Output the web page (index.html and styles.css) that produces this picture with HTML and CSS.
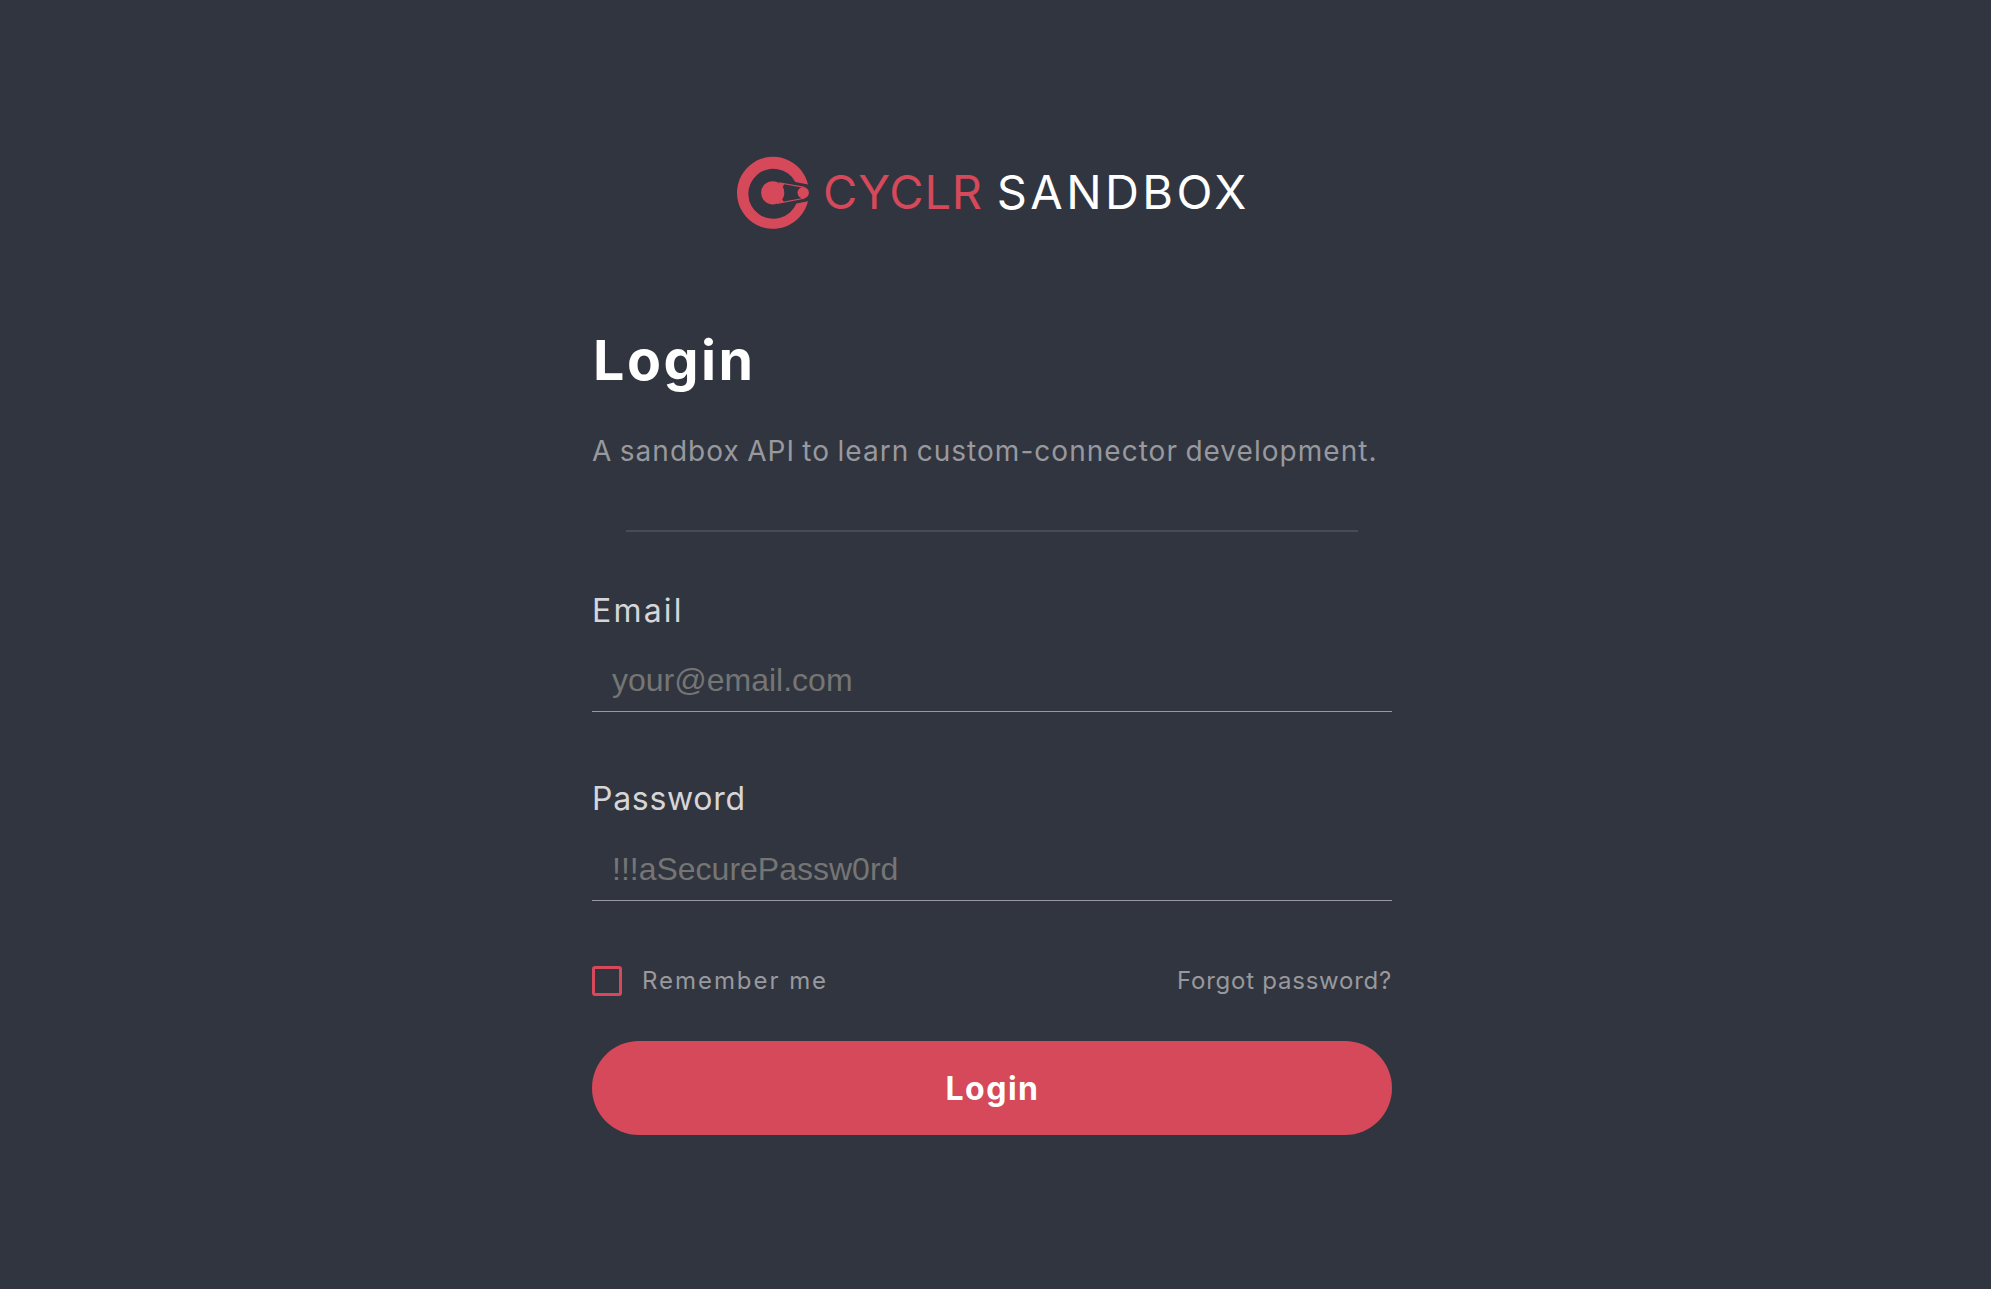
FILE: index.html
```html
<!DOCTYPE html>
<html lang="en">
<head>
<meta charset="utf-8">
<title>Login - Cyclr Sandbox</title>
<link rel="stylesheet" href="styles.css">
</head>
<body>
<main class="login">
  <div class="brand">
    <svg class="brand-mark" viewBox="0 0 72 72" aria-hidden="true">
      <path class="fill" d="M71 27.4 A36 36 0 1 0 71 44.2 L59.4 46.4 A25 25 0 1 1 58.4 25 Z"/>
      <circle class="fill" cx="35.7" cy="35.8" r="11.6"/>
      <circle class="fill" cx="66.2" cy="35.8" r="5.7"/>
      <path class="belt" d="M42 25.8 L67.5 30.4 M40 46.4 L67.5 41.2"/>
      <path class="fill" d="M42 25.4 L47.5 26.8 L45 31 Z M44.5 41.5 L47 45 L42 46.2 Z"/>
    </svg>
    <span class="brand-name"><span class="brand-cyclr">CYCLR</span><span class="brand-sandbox">SANDBOX</span></span>
  </div>
  <h1 class="title">Login</h1>
  <p class="subtitle">A sandbox API to learn custom-connector development.</p>
  <hr class="divider">
  <form class="form">
    <div class="field">
      <label class="label label-email" for="email">Email</label>
      <input class="input" id="email" type="email" placeholder="your@email.com">
    </div>
    <div class="field">
      <label class="label" for="password">Password</label>
      <input class="input" id="password" type="password" placeholder="!!!aSecurePassw0rd">
    </div>
    <div class="options">
      <label class="remember"><input class="checkbox" type="checkbox"><span>Remember me</span></label>
      <a class="forgot" href="#">Forgot password?</a>
    </div>
    <button class="submit" type="submit">Login</button>
  </form>
</main>
</body>
</html>
```
FILE: styles.css
```css
* { box-sizing: border-box; }

body {
  margin: 0;
  min-height: 100vh;
  background: #31353f;
  color: #fff;
  font-family: Inter, "Open Sans", sans-serif;
}

.login {
  width: 800px;
  margin: 0 0 0 592px;
  padding-top: 157px;
}

.brand {
  display: flex;
  align-items: flex-start;
  height: 72px;
  padding-left: 145px;
}

.brand-mark { width: 72px; height: 72px; overflow: visible; }
.fill { fill: #d5495a; }
.belt { fill: none; stroke: #d5495a; stroke-width: 1.1; }

.brand-name {
  display: flex;
  margin-left: 14px;
  font-size: 47px;
  line-height: 70px;
}

.brand-cyclr { color: #d5495a; letter-spacing: 0.8px; }
.brand-sandbox { margin-left: 14px; letter-spacing: 3.4px; }

.title {
  margin: 97px 0 0 1px;
  font-size: 55.5px;
  line-height: 68px;
  font-weight: 700;
  letter-spacing: 2.5px;
}

.subtitle {
  margin: 40px 0 0;
  color: #98999e;
  font-size: 28px;
  line-height: 34px;
  letter-spacing: 1.03px;
  word-spacing: -1.5px;
  white-space: nowrap;
}

.divider {
  width: 732px;
  height: 2px;
  margin: 62px 0 59px 34px;
  border: 0;
  background: #484b55;
}

.field {
  display: flex;
  flex-direction: column;
  margin-bottom: 67px;
}

.label {
  color: #d6d6d9;
  font-size: 32px;
  line-height: 40px;
  letter-spacing: 0.7px;
}

.label-email { letter-spacing: 2.2px; }

.input {
  width: 100%;
  height: 63px;
  margin-top: 18px;
  padding: 0 20px;
  border: 0;
  border-bottom: 1px solid #98999e;
  border-radius: 0;
  outline: 0;
  background: transparent;
  color: #fff;
  font: 32px "Liberation Sans", Arial, sans-serif;
}

.input::placeholder { color: #757575; opacity: 1; }

.field + .field .input { margin-top: 19px; }
.field + .field { margin-bottom: 65px; }

.options {
  display: flex;
  justify-content: space-between;
  height: 30px;
  color: #98999e;
  font-size: 24px;
  line-height: 29px;
}

.remember { display: flex; gap: 20px; letter-spacing: 1.95px; }

.checkbox {
  width: 30px;
  height: 30px;
  margin: 0;
  appearance: none;
  border: 3px solid #d5495a;
  border-radius: 3px;
}

.forgot { color: inherit; text-decoration: none; letter-spacing: 0.75px; }

.submit {
  display: block;
  width: 100%;
  height: 94px;
  margin-top: 45px;
  padding: 0 0 0 1px;
  border: 0;
  border-radius: 47px;
  background: #d5495a;
  color: #fff;
  font: 700 32px Inter, "Open Sans", sans-serif;
  letter-spacing: 1.5px;
}
```
